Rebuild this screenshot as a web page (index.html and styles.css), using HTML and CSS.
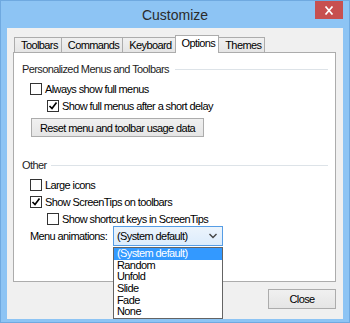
FILE: index.html
```html
<!DOCTYPE html>
<html lang="en">
<head>
  <meta charset="UTF-8" />
  <title>Customize</title>
  <link rel="stylesheet" href="styles.css">
</head>
<body>
  <div class="window">
    <header class="titlebar">
      <span></span>
      <span class="title">Customize</span>
      <button class="close-x">
        <svg width="10" height="9" viewBox="0 0 10 9"><path d="M1.5 0.5 L8.5 8.5 M8.5 0.5 L1.5 8.5" stroke="#fff" stroke-width="1.7" fill="none"/></svg>
      </button>
    </header>

    <div class="client">
      <nav class="tabs">
        <div class="tab">Toolbars</div>
        <div class="tab">Commands</div>
        <div class="tab">Keyboard</div>
        <div class="tab active">Options</div>
        <div class="tab">Themes</div>
      </nav>

      <div class="panel">
        <div class="group-title">Personalized Menus and Toolbars</div>
        <label class="check-row"><span class="box"></span>Always show full menus</label>
        <label class="check-row sub"><span class="box"><svg width="10" height="10" viewBox="0 0 10 10"><path d="M1.5 5 L4 7.5 L8.5 1.5" stroke="#000" stroke-width="1.7" fill="none"/></svg></span>Show full menus after a short delay</label>
        <button class="btn reset-btn">Reset menu and toolbar usage data</button>

        <div class="group-title other">Other</div>
        <label class="check-row"><span class="box"></span>Large icons</label>
        <label class="check-row"><span class="box"><svg width="10" height="10" viewBox="0 0 10 10"><path d="M1.5 5 L4 7.5 L8.5 1.5" stroke="#000" stroke-width="1.7" fill="none"/></svg></span>Show ScreenTips on toolbars</label>
        <label class="check-row sub"><span class="box"></span>Show shortcut keys in ScreenTips</label>

        <div class="menu-row">
          <span class="menu-label">Menu animations:</span>
          <div class="select">
            <span>(System default)</span>
            <svg class="chevron" width="8" height="6" viewBox="0 0 8 6"><path d="M0.5 1 L4 4.5 L7.5 1" stroke="#444" stroke-width="1.4" fill="none"/></svg>
            <ul class="dropdown">
              <li class="selected">(System default)</li>
              <li>Random</li>
              <li>Unfold</li>
              <li>Slide</li>
              <li>Fade</li>
              <li>None</li>
            </ul>
          </div>
        </div>
      </div>

      <div class="footer">
        <button class="btn close-btn">Close</button>
      </div>
    </div>
  </div>
</body>
</html>
```

FILE: styles.css
```css
body {
  margin: 0;
  font-family: "Liberation Sans", Arial, sans-serif;
  font-size: 11px;
  letter-spacing: -0.6px;
  color: #000;
}

.window {
  width: 350px;
  height: 323px;
  box-sizing: border-box;
  border: 1px solid #6fa9e0;
  background: #8dc4f4;
  padding: 0 6px 3px;
  display: flex;
  flex-direction: column;
}

.titlebar {
  height: 27px;
  display: grid;
  grid-template-columns: 1fr auto 1fr;
}

.title {
  font-size: 14px;
  letter-spacing: 0;
  color: #2b2b2b;
  align-self: center;
}

.close-x {
  justify-self: end;
  align-self: start;
  width: 28px;
  height: 18px;
  border: none;
  padding: 0;
  background: #c75050;
  display: flex;
  align-items: center;
  justify-content: center;
}

.client {
  flex: 1;
  background: #f0f0f0;
  padding: 7px 7px 0 6px;
  display: flex;
  flex-direction: column;
}

.tabs {
  display: flex;
  align-items: flex-end;
  height: 18px;
  padding-left: 1px;
}

.tab {
  height: 15px;
  box-sizing: border-box;
  margin-bottom: 1px;
  margin-right: -1px;
  border: 1px solid #acacac;
  border-bottom: none;
  background: linear-gradient(#f0f0f0, #e5e5e5);
  padding: 1px 3px 0 6px;
  line-height: 13px;
}

.tab.active {
  height: 18px;
  margin-bottom: 0;
  padding-top: 1px;
  background: #fff;
  position: relative;
  z-index: 1;
}

.panel {
  height: 230px;
  box-sizing: border-box;
  margin-top: -1px;
  border: 1px solid #acacac;
  background: #fff;
  padding: 9px 7px 0 8px;
}

.group-title {
  display: flex;
  align-items: center;
  gap: 6px;
  height: 14px;
  line-height: 14px;
  color: #1e1e1e;
  margin-bottom: 4px;
}

.group-title::after {
  content: "";
  flex: 1;
  height: 1px;
  background: #dde3e8;
}

.group-title.other {
  margin-top: 21px;
  gap: 4px;
}

.check-row {
  display: flex;
  align-items: center;
  gap: 3px;
  height: 17px;
  padding-left: 8px;
}

.check-row.sub {
  padding-left: 25px;
}

.box {
  width: 12px;
  height: 12px;
  box-sizing: border-box;
  border: 1px solid #333;
  background: #fff;
  display: flex;
  align-items: center;
  justify-content: center;
}

.btn {
  height: 19px;
  box-sizing: border-box;
  border: 1px solid #acacac;
  background: linear-gradient(#f0f0f0, #e5e5e5);
  font: inherit;
  letter-spacing: inherit;
  color: #000;
  padding: 0 8px;
}

.reset-btn {
  margin: 4px 0 0 9px;
}

.menu-row {
  display: flex;
  align-items: center;
  margin-top: -1px;
  padding-left: 8px;
}

.menu-label {
  width: 83px;
  white-space: nowrap;
}

.select {
  position: relative;
  width: 110px;
  height: 20px;
  box-sizing: border-box;
  border: 1px solid #569de5;
  background: linear-gradient(#ecf4fc, #dcecfc);
  display: flex;
  align-items: center;
  justify-content: space-between;
  padding: 0 5px 0 3px;
}

.dropdown {
  position: absolute;
  top: 20px;
  left: -1px;
  width: 110px;
  box-sizing: border-box;
  margin: 0;
  padding: 0;
  list-style: none;
  border: 1px solid #646464;
  background: #fff;
  z-index: 2;
}

.dropdown li {
  line-height: 11.66px;
  height: 11.66px;
  padding-left: 3px;
}

.dropdown li.selected {
  background: #3399ff;
  color: #fff;
}

.footer {
  display: flex;
  justify-content: flex-end;
  margin-top: 7px;
}

.close-btn {
  width: 68px;
  height: 20px;
}
```
